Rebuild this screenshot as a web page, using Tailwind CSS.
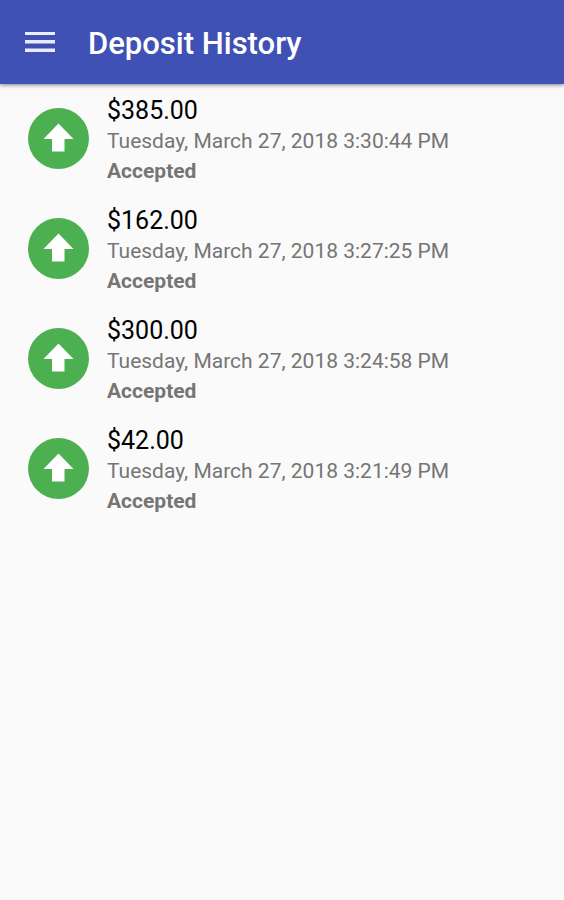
<!DOCTYPE html>
<html lang="en">
<head>
<meta charset="utf-8">
<meta name="viewport" content="width=device-width, initial-scale=1">
<title>Deposit History</title>
<script src="https://cdn.jsdelivr.net/npm/@tailwindcss/browser@4"></script>
</head>
<body class="min-h-screen bg-[#fafafa] font-['Roboto',sans-serif]">
<header class="flex h-[84px] items-center gap-7 bg-[#3f51b5] px-5 text-white shadow-[0_1px_4px_rgba(0,0,0,0.5)]">
<button type="button" aria-label="Open menu" class="flex size-10 items-center justify-center">
<svg class="h-5 w-[30px]" viewBox="0 0 30 20" fill="#e9edff" aria-hidden="true"><path d="M0-.5h30v3.500H0zM0 8h30v3.500H0zM0 16.500h30v3.500H0z"/></svg>
</button>
<h1 class="pt-1 text-[31px] leading-9 font-medium">Deposit History</h1>
</header>
<main>
<ul class="flex flex-col gap-5 px-7 pt-3">
<li class="flex items-start gap-[18px]">
<svg class="mt-3 size-[61px] shrink-0" viewBox="0 0 61 61" aria-hidden="true"><circle cx="30.500" cy="30.500" r="30.500" fill="#4caf50"/><path d="M30.500 15.500 45.500 31H36.500v12.500H24V31h-8.500z" fill="#fff"/></svg>
<div class="text-[21px] leading-[30px] text-[#757575]"><p class="text-[25px] text-black">$385.00</p><p>Tuesday, March 27, 2018 3:30:44 PM</p><p class="font-bold">Accepted</p></div>
</li>
<li class="flex items-start gap-[18px]">
<svg class="mt-3 size-[61px] shrink-0" viewBox="0 0 61 61" aria-hidden="true"><circle cx="30.500" cy="30.500" r="30.500" fill="#4caf50"/><path d="M30.500 15.500 45.500 31H36.500v12.500H24V31h-8.500z" fill="#fff"/></svg>
<div class="text-[21px] leading-[30px] text-[#757575]"><p class="text-[25px] text-black">$162.00</p><p>Tuesday, March 27, 2018 3:27:25 PM</p><p class="font-bold">Accepted</p></div>
</li>
<li class="flex items-start gap-[18px]">
<svg class="mt-3 size-[61px] shrink-0" viewBox="0 0 61 61" aria-hidden="true"><circle cx="30.500" cy="30.500" r="30.500" fill="#4caf50"/><path d="M30.500 15.500 45.500 31H36.500v12.500H24V31h-8.500z" fill="#fff"/></svg>
<div class="text-[21px] leading-[30px] text-[#757575]"><p class="text-[25px] text-black">$300.00</p><p>Tuesday, March 27, 2018 3:24:58 PM</p><p class="font-bold">Accepted</p></div>
</li>
<li class="flex items-start gap-[18px]">
<svg class="mt-3 size-[61px] shrink-0" viewBox="0 0 61 61" aria-hidden="true"><circle cx="30.500" cy="30.500" r="30.500" fill="#4caf50"/><path d="M30.500 15.500 45.500 31H36.500v12.500H24V31h-8.500z" fill="#fff"/></svg>
<div class="text-[21px] leading-[30px] text-[#757575]"><p class="text-[25px] text-black">$42.00</p><p>Tuesday, March 27, 2018 3:21:49 PM</p><p class="font-bold">Accepted</p></div>
</li>
</ul>
</main>
</body>
</html>
